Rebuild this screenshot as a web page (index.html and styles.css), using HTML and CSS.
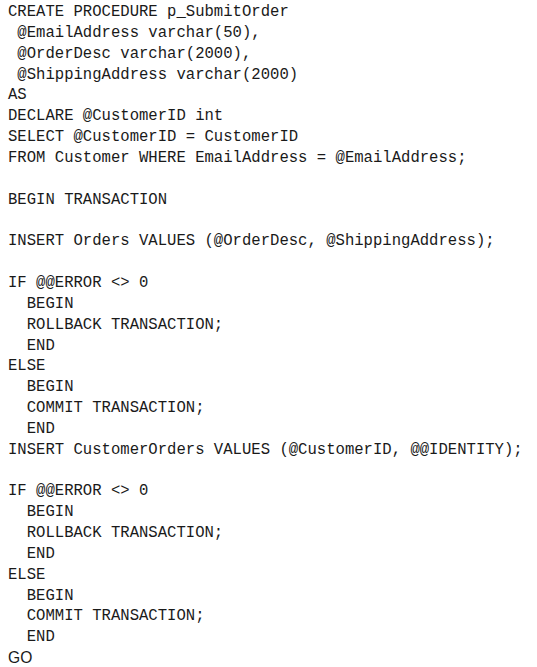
FILE: index.html
```html
<!DOCTYPE html>
<html>
<head>
<meta charset="utf-8">
<link rel="stylesheet" href="styles.css">
</head>
<body>
<pre class="code">CREATE PROCEDURE p_SubmitOrder
 @EmailAddress varchar(50),
 @OrderDesc varchar(2000),
 @ShippingAddress varchar(2000)
AS
DECLARE @CustomerID int
SELECT @CustomerID = CustomerID
FROM Customer WHERE EmailAddress = @EmailAddress;

BEGIN TRANSACTION

INSERT Orders VALUES (@OrderDesc, @ShippingAddress);

IF @@ERROR &lt;&gt; 0
  BEGIN
  ROLLBACK TRANSACTION;
  END
ELSE
  BEGIN
  COMMIT TRANSACTION;
  END
INSERT CustomerOrders VALUES (@CustomerID, @@IDENTITY);

IF @@ERROR &lt;&gt; 0
  BEGIN
  ROLLBACK TRANSACTION;
  END
ELSE
  BEGIN
  COMMIT TRANSACTION;
  END
<span class="go">GO</span></pre>
</body>
</html>
```
FILE: styles.css
```css
html, body {
  margin: 0;
  padding: 0;
  background: #ffffff;
}
.code {
  margin: 0;
  padding: 2px 8px 0 8px;
  font-family: "Liberation Mono", "Courier New", monospace;
  font-size: 15.6px;
  line-height: 20.84px;
  color: #1a1a1a;
  white-space: pre;
}
.go {
  font-family: "Liberation Sans", Arial, sans-serif;
}
```
